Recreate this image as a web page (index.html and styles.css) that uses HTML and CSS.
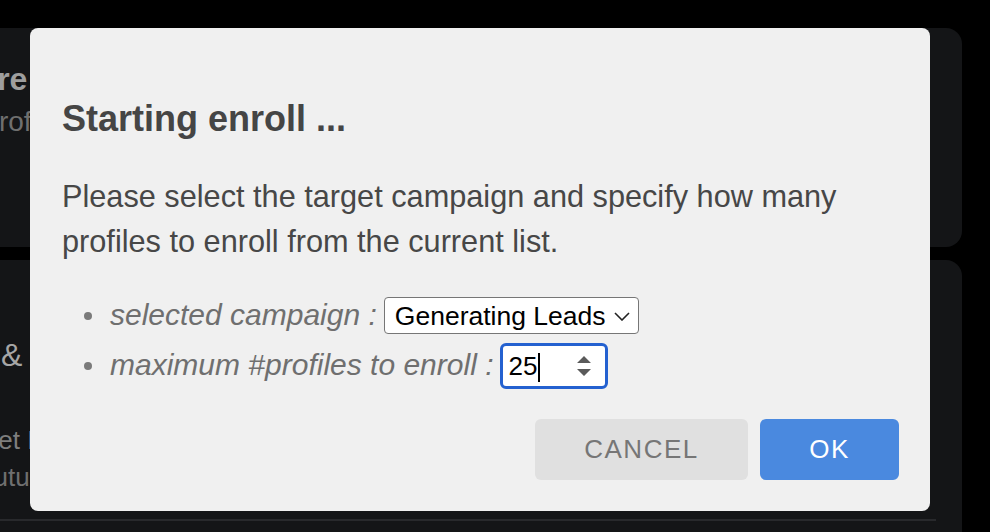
FILE: index.html
```html
<!DOCTYPE html>
<html lang="en">
<head>
<meta charset="utf-8">
<title>Starting enroll</title>
<link rel="stylesheet" href="styles.css">
</head>
<body>
<div class="page">
  <section class="card card-top">
    <h3 class="bg-title">Explore profiles</h3>
    <p class="bg-sub">Enroll profiles</p>
  </section>
  <section class="card card-bottom">
    <div class="row">
      <h3 class="bg-amp">Leads &amp; Campaigns</h3>
      <p class="bg-line1">Set <strong>Intervals</strong></p>
      <p class="bg-line2">the future</p>
    </div>
  </section>

  <div class="dialog" role="dialog" aria-labelledby="dlg-title">
    <h2 class="dlg-title" id="dlg-title">Starting enroll ...</h2>
    <p class="dlg-text">Please select the target campaign and specify how many profiles to enroll from the current list.</p>
    <ul class="opts">
      <li class="opt opt-campaign">
        <span class="opt-label">selected campaign :</span>
        <span class="sel-wrap">
          <select class="sel">
            <option>Generating Leads</option>
          </select>
          <svg class="chev" width="16" height="9" viewBox="0 0 16 9"><path d="M1 1 L8 8 L15 1" fill="none" stroke="#222" stroke-width="1.6"/></svg>
        </span>
      </li>
      <li class="opt opt-max">
        <span class="opt-label">maximum #profiles to enroll :</span>
        <span class="num-wrap">
          <input class="num" type="number" value="25">
          <span class="caret"></span>
          <svg class="spin" width="14" height="21" viewBox="0 0 14 21"><path d="M0 7 L7 0 L14 7 Z M0 13 L14 13 L7 20 Z" fill="#5a5a5a"/></svg>
        </span>
      </li>
    </ul>
    <div class="actions">
      <button class="btn btn-cancel" type="button">CANCEL</button>
      <button class="btn btn-ok" type="button">OK</button>
    </div>
  </div>
</div>
</body>
</html>
```
FILE: styles.css
```css
* { box-sizing: border-box; }
html, body { margin: 0; padding: 0; }
body {
  background: #000;
  width: 990px;
  height: 532px;
  overflow: hidden;
  font-family: "Liberation Sans", Arial, sans-serif;
}
.page {
  position: relative;
  width: 990px;
  height: 532px;
  padding: 28px 28px 0 0;
  display: flex;
  flex-direction: column;
  gap: 13px;
}
.card {
  margin-left: -20px;
  padding-left: 20px;
  background: #141517;
  border-radius: 16px;
  overflow: hidden;
  white-space: nowrap;
}
.card-top {
  height: 219px;
  padding-top: 32px;
  flex: none;
}
.card-bottom {
  height: 272px;
  flex: none;
  padding-top: 76px;
  padding-right: 26px;
  border-radius: 16px 16px 0 0;
}
.bg-title {
  margin: 0 0 0 -90px;
  font-size: 32px;
  line-height: 38px;
  font-weight: bold;
  color: #9e9e9e;
}
.bg-sub {
  margin: 7px 0 0 -96px;
  font-size: 28px;
  line-height: 34px;
  color: #6f6f6f;
}
.row {
  border-bottom: 2px solid #28292c;
  padding-bottom: 26px;
}
.bg-amp {
  margin: 0 0 0 -95px;
  font-size: 32px;
  line-height: 38px;
  font-weight: normal;
  color: #a6a6a6;
}
.bg-line1 {
  margin: 51px 0 0 -19px;
  font-size: 26px;
  line-height: 31px;
  color: #7e7e7e;
}
.bg-line1 strong { color: #ababab; font-weight: normal; }
.bg-line2 {
  margin: 6px 0 0 -57px;
  font-size: 26px;
  line-height: 31px;
  color: #6f6f6f;
}

.dialog {
  position: absolute;
  left: 30px;
  top: 28px;
  width: 900px;
  background: #f0f0f0;
  border-radius: 8px;
  padding: 69px 31px 31px 32px;
}
.dlg-title {
  margin: 0;
  font-size: 36px;
  line-height: 43px;
  font-weight: bold;
  color: #454545;
}
.dlg-text {
  margin: 34px 0 0;
  font-size: 30.7px;
  line-height: 45px;
  color: #474747;
}
.opts {
  list-style: none;
  margin: 33px 0 0;
  padding: 0;
  display: flex;
  flex-direction: column;
  gap: 9px;
}
.opt {
  display: flex;
  align-items: baseline;
  padding-left: 22px;
}
.opt::before {
  content: "";
  width: 8px;
  height: 8px;
  border-radius: 50%;
  background: #7a7a7a;
  margin-right: 18px;
  align-self: center;
  flex: none;
}
.opt-label {
  font-size: 30px;
  font-style: italic;
  color: #6f6f6f;
  margin-right: 7px;
}
.sel-wrap, .num-wrap {
  position: relative;
  display: inline-flex;
}
.sel {
  appearance: none;
  -webkit-appearance: none;
  width: 255px;
  height: 37px;
  border: 1px solid #767676;
  border-radius: 4px;
  background: #fff;
  color: #000;
  font-family: "Liberation Sans", Arial, sans-serif;
  font-size: 26.5px;
  padding: 0 0 0 10px;
  margin: 0;
}
.chev {
  position: absolute;
  right: 9px;
  top: 15px;
  pointer-events: none;
}
.num {
  appearance: textfield;
  -moz-appearance: textfield;
  width: 108px;
  height: 46px;
  border: 3px solid #2461d0;
  border-radius: 6px;
  background: #fff;
  color: #000;
  font-family: "Liberation Sans", Arial, sans-serif;
  font-size: 26px;
  padding: 0 0 0 5px;
  margin: 0;
  outline: none;
}
.num::-webkit-inner-spin-button,
.num::-webkit-outer-spin-button {
  -webkit-appearance: none;
  margin: 0;
}
.caret {
  position: absolute;
  left: 38px;
  top: 10px;
  width: 2px;
  height: 29px;
  background: #000;
}
.spin {
  position: absolute;
  left: 77px;
  top: 13px;
  pointer-events: none;
}
.actions {
  margin-top: 30px;
  display: flex;
  justify-content: flex-end;
  gap: 12px;
}
.btn {
  height: 61px;
  border: none;
  border-radius: 6px;
  font-family: "Liberation Sans", Arial, sans-serif;
  font-size: 26px;
  letter-spacing: 1.5px;
  padding: 0;
  cursor: pointer;
}
.btn-cancel {
  width: 213px;
  background: #e0e0e0;
  color: #767676;
}
.btn-ok {
  width: 139px;
  background: #4a89df;
  color: #fff;
}
```
